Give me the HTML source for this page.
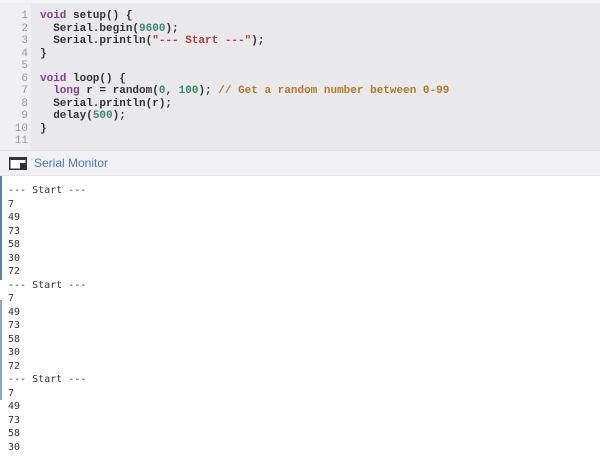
<!DOCTYPE html>
<html><head><style>
body{margin:0;width:600px;height:459px;background:#fff;overflow:hidden;position:relative;font-family:"Liberation Sans",sans-serif}
#top{position:absolute;left:0;top:0;width:600px;height:3px;background:#f4f4f5}
#code{position:absolute;left:0;top:3px;width:600px;height:147px;background:#e9e9eb}
#gut{position:absolute;left:0;top:3px;width:31px;height:147px;background:#f0f0f2}
.ln{position:absolute;right:572px;width:30px;text-align:right;font:11px "Liberation Mono",monospace;color:#999}
.cl{position:absolute;left:40px;font:bold 11px "Liberation Mono",monospace;color:#333;white-space:pre}
.k{color:#8a3a9a}.n{color:#3a8a6a}.s{color:#b83a3a}.c{color:#b8762a}
#bar{position:absolute;left:0;top:150px;width:600px;height:26px;background:#f1f1f3;border-top:1px solid #e2e2e4;border-bottom:1px solid #e2e2e4;box-sizing:border-box}
#bar span{position:absolute;left:34px;top:5px;font-size:12px;color:#4a7ab5}
.o{position:absolute;left:8px;font:10px "DejaVu Sans Mono",monospace;color:#333;white-space:pre}
.edge{position:absolute;left:0;width:2px;background:#5a7fa8}
</style></head><body>
<div id="top"></div><div id="code"></div><div id="gut"></div>
<div class="ln" style="top:10px">1</div><div class="ln" style="top:22.5px">2</div><div class="ln" style="top:35px">3</div><div class="ln" style="top:47.5px">4</div><div class="ln" style="top:60px">5</div><div class="ln" style="top:72.5px">6</div><div class="ln" style="top:85px">7</div><div class="ln" style="top:97.5px">8</div><div class="ln" style="top:110px">9</div><div class="ln" style="top:122.5px">10</div><div class="ln" style="top:135px">11</div>
<div class="cl" style="top:10px"><span class="k">void</span> setup() {</div>
<div class="cl" style="top:22.5px">  Serial.begin(<span class="n">9600</span>);</div>
<div class="cl" style="top:35px">  Serial.println(<span class="s">"--- Start ---"</span>);</div>
<div class="cl" style="top:47.5px">}</div>
<div class="cl" style="top:72.5px"><span class="k">void</span> loop() {</div>
<div class="cl" style="top:85px">  <span class="k">long</span> r = random(<span class="n">0</span>, <span class="n">100</span>); <span class="c">// Get a random number between 0-99</span></div>
<div class="cl" style="top:97.5px">  Serial.println(r);</div>
<div class="cl" style="top:110px">  delay(<span class="n">500</span>);</div>
<div class="cl" style="top:122.5px">}</div>
<div id="bar">
<svg style="position:absolute;left:9px;top:6px" width="18" height="13" viewBox="0 0 18 13"><rect x="0.75" y="0.75" width="16.5" height="11.5" fill="#fff" stroke="#333" stroke-width="1.5"/><rect x="0" y="0" width="18" height="3" fill="#333"/><rect x="11" y="6" width="6" height="6" fill="#333"/></svg>
<span>Serial Monitor</span></div>
<div class="edge" style="top:176px;height:104px"></div>
<div class="edge" style="top:300px;height:100px;opacity:.7"></div>
<div class="o" style="top:185px">--- Start ---</div>
<div class="o" style="top:198.5px">7</div>
<div class="o" style="top:212px">49</div>
<div class="o" style="top:225.5px">73</div>
<div class="o" style="top:239px">58</div>
<div class="o" style="top:252.5px">30</div>
<div class="o" style="top:266px">72</div>
<div class="o" style="top:279.5px">--- Start ---</div>
<div class="o" style="top:293px">7</div>
<div class="o" style="top:306.5px">49</div>
<div class="o" style="top:320px">73</div>
<div class="o" style="top:333.5px">58</div>
<div class="o" style="top:347px">30</div>
<div class="o" style="top:360.5px">72</div>
<div class="o" style="top:374px">--- Start ---</div>
<div class="o" style="top:387.5px">7</div>
<div class="o" style="top:401px">49</div>
<div class="o" style="top:414.5px">73</div>
<div class="o" style="top:428px">58</div>
<div class="o" style="top:441.5px">30</div>
</body></html>
